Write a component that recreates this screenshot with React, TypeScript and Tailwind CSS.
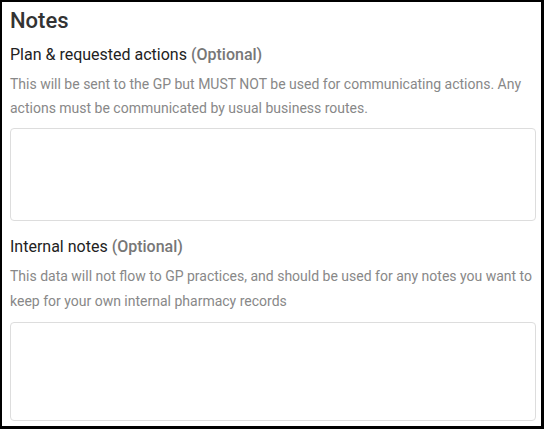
import React from "react";

export default function App() {
  return (
    <div className="w-[544px] h-[429px] overflow-hidden bg-white border-l-2 border-t-2 border-r-[3px] border-b-[3px] border-black pl-2 pr-[5px] pt-[5px] font-['Roboto',sans-serif]">
      <h2 className="text-[22px] leading-[28px] font-medium text-[#333]">Notes</h2>

      {/* Plan & requested actions */}
      <div className="mt-2 text-[16px] leading-[24px] text-[#222]">
        Plan &amp; requested actions <span className="text-[#777] font-medium">(Optional)</span>
      </div>
      <p className="mt-[5px] text-[14px] leading-[24px] text-[#888]">
        This will be sent to the GP but MUST NOT be used for communicating actions. Any actions must be communicated by usual business routes.
      </p>
      <textarea className="mt-2 block w-full h-[93px] rounded border border-[#ddd] resize-none outline-none" />

      {/* Internal notes */}
      <div className="mt-[14px] text-[16px] leading-[24px] text-[#222]">
        Internal notes <span className="text-[#777] font-medium">(Optional)</span>
      </div>
      <p className="mt-[5px] text-[14px] leading-[25px] text-[#888]">
        This data will not flow to GP practices, and should be used for any notes you want to keep for your own internal pharmacy records
      </p>
      <textarea className="mt-[8px] block w-full h-[99px] rounded border border-[#ddd] resize-none outline-none" />
    </div>
  );
}
